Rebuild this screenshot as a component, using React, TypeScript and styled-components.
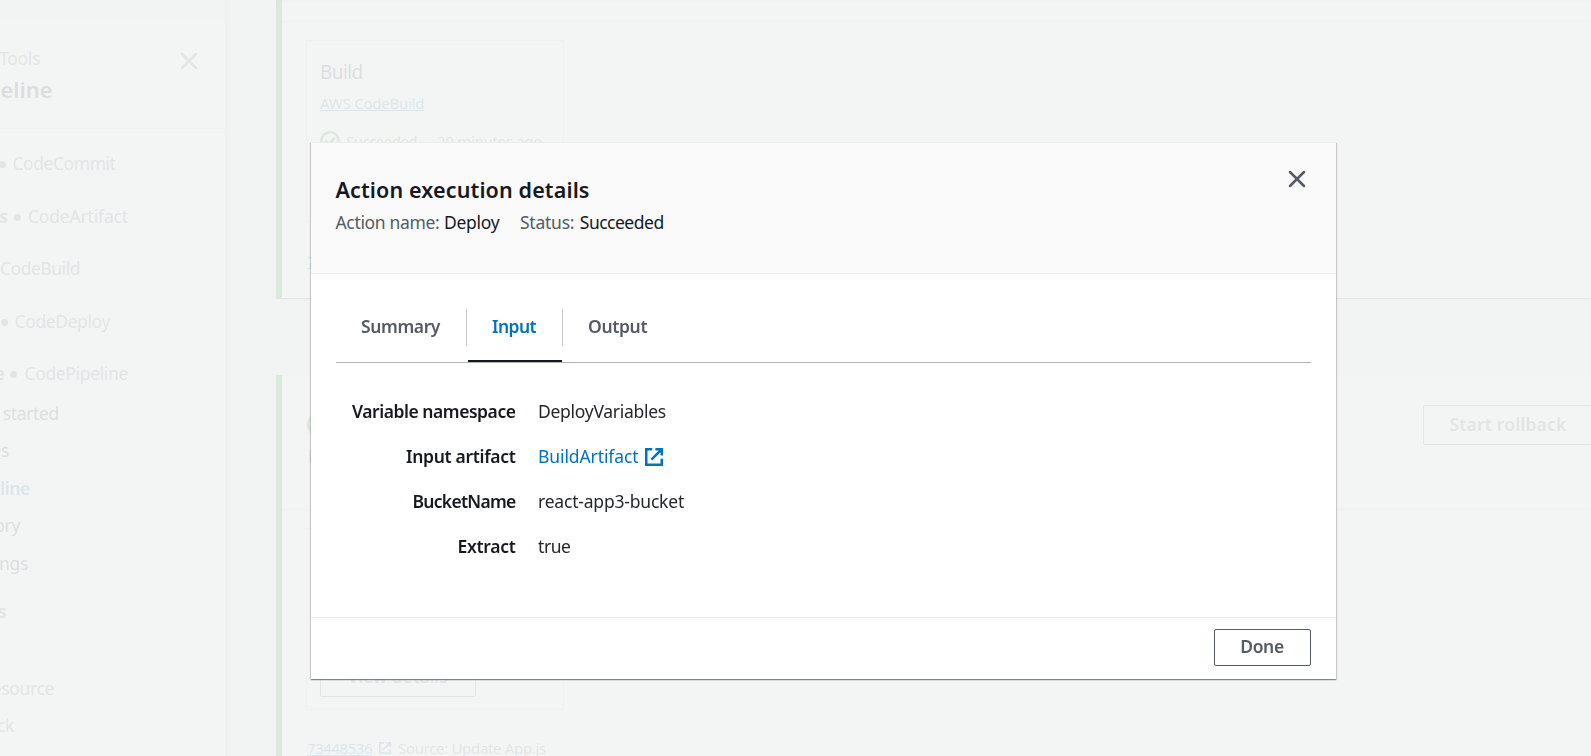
import React from 'react';
import styled, { createGlobalStyle, css } from 'styled-components';

const color = {
  ink: '#16191f',
  value: '#24272d',
  muted: '#545b64',
  link: '#0073bb',
  success: '#1d8102',
  canvas: '#f2f3f3',
  header: '#fafafa',
  border: '#eaeded',
  divider: '#d5dbdb',
};

const GlobalStyle = createGlobalStyle`
  * { box-sizing: border-box; }
  body {
    margin: 0;
    overflow: hidden;
    background: ${color.canvas};
    color: ${color.ink};
    font: 400 17.5px/24px "Noto Sans", "Open Sans", sans-serif;
  }
  h1, h2, p, dl, dt, dd { margin: 0; padding: 0; }
`;

interface TrackProps {
  $track?: number;
}

const tracking = css<TrackProps>`
  letter-spacing: ${(p) => p.$track ?? -0.35}px;
  white-space: nowrap;
`;

/* ---------- Console behind the dialog ---------- */

const Console = styled.div`
  display: grid;
  grid-template-columns: 227px 1fr;
  width: 1591px;
  height: 756px;
  overflow: hidden;
`;

const Sidebar = styled.nav`
  border-right: 1px solid #c3cacb;
  background: #fff;
  overflow: hidden;
`;

const SidebarTop = styled.div`
  height: 21px;
  background: ${color.canvas};
`;

const SidebarHeader = styled.header`
  display: flex;
  justify-content: space-between;
  height: 108px;
  padding: 25px 28px 0 0;
  border-bottom: 1px solid ${color.divider};
`;

const SidebarClose = styled.span`
  display: flex;
  padding-top: 6px;
`;

const Clipped = styled.div<TrackProps & { $width: number; $gap?: number; $tone?: string; $bold?: boolean }>`
  display: flex;
  justify-content: flex-end;
  align-items: center;
  width: ${(p) => p.$width}px;
  height: 24px;
  margin-top: ${(p) => p.$gap ?? 0}px;
  color: ${(p) => p.$tone ?? color.muted};
  font-weight: ${(p) => (p.$bold ? 600 : 400)};
  ${tracking}
`;

const Product = styled(Clipped)`
  height: 30px;
  font-size: 22px;
  line-height: 30px;
`;

const Dot = styled.i`
  flex: none;
  width: 7px;
  height: 7px;
  margin: 2px 7px 0 6px;
  border-radius: 50%;
  background: ${color.muted};
`;

const Main = styled.main`
  padding-left: 49px;
  overflow: hidden;
`;

const Stage = styled.section<{ $height: number; $gap?: number }>`
  width: 1400px;
  height: ${(p) => p.$height}px;
  margin-top: ${(p) => p.$gap ?? 0}px;
  border-left: 6px solid ${color.success};
  background: #fff;
  box-shadow: 0 1px 1px rgba(0, 28, 36, 0.6);
`;

const StageHeader = styled.header<{ $height: number }>`
  display: flex;
  justify-content: space-between;
  height: ${(p) => p.$height}px;
  padding-left: 25px;
  border-top: 1px solid ${color.border};
  border-bottom: 1px solid ${color.divider};
  background: ${color.header};
`;

const StageBody = styled.div`
  padding: 18px 24px 0;
`;

const StageTitle = styled.div`
  display: grid;
  gap: 8px;
  align-content: start;
  padding-top: 37px;
`;

const StageNote = styled.span`
  padding-left: 1px;
  color: ${color.ink};
`;

const ActionCard = styled.article<{ $height: number }>`
  display: flex;
  flex-direction: column;
  align-items: flex-start;
  width: 258px;
  height: ${(p) => p.$height}px;
  padding: 18px 13px 12px;
  border: 1px solid ${color.divider};
`;

const ActionName = styled.h2<TrackProps>`
  padding-bottom: 7px;
  font-size: 19px;
  font-weight: 400;
  line-height: 26px;
  ${tracking}
`;

const SmallLink = styled.span<TrackProps>`
  color: ${color.link};
  font-size: 15px;
  line-height: 22px;
  text-decoration: underline;
  text-underline-offset: 1px;
  ${tracking}
`;

const StatusLine = styled.div`
  display: flex;
  align-items: center;
  margin-top: 16px;
`;

const SmallText = styled.span<TrackProps & { $tone?: string }>`
  color: ${(p) => p.$tone ?? color.muted};
  font-size: 15px;
  line-height: 22px;
  ${tracking}
`;

const StatusText = styled(SmallText)`
  margin: 0 20px 0 6px;
`;

const Revision = styled.div<{ $gap: number }>`
  display: flex;
  align-items: center;
  gap: 7px;
  margin: ${(p) => p.$gap}px 0 0 1px;
`;

const CardFoot = styled.div`
  margin-top: auto;
`;

const RollbackSlot = styled.div`
  width: 253px;
  padding-top: 29px;
`;

const Button = styled.button<TrackProps & { $width: number; $height: number; $lift?: number }>`
  display: block;
  width: ${(p) => p.$width}px;
  height: ${(p) => p.$height}px;
  padding: 0 1px ${(p) => p.$lift ?? 3}px 0;
  border: 1px solid ${color.muted};
  border-radius: 2px;
  background: #fff;
  color: ${color.muted};
  font: inherit;
  font-weight: 600;
  text-align: center;
  ${tracking}
`;

/* ---------- Dialog ---------- */

const Scrim = styled.div`
  position: fixed;
  inset: 0;
  padding: 142px 0 0 311px;
  background: rgba(242, 243, 243, 0.9);
`;

const Dialog = styled.section`
  display: flex;
  flex-direction: column;
  width: 1025px;
  height: 537px;
  border-top: 1px solid ${color.border};
  background: #fff;
  box-shadow: 0 1px 1px 0 rgba(0, 28, 36, 0.3), 1px 1px 1px 0 rgba(0, 28, 36, 0.15),
    -1px 1px 1px 0 rgba(0, 28, 36, 0.15);
`;

const DialogHeader = styled.header`
  display: flex;
  justify-content: space-between;
  height: 131px;
  padding: 32px 30px 0 24.5px;
  border-bottom: 1px solid ${color.border};
  background: ${color.header};
`;

const Title = styled.h1<TrackProps>`
  font-size: 21.5px;
  font-weight: 600;
  line-height: 30px;
  ${tracking}
`;

const Meta = styled.p`
  display: flex;
  margin-top: 5px;
`;

const MetaLabel = styled.span<TrackProps & { $gap: number }>`
  margin-right: ${(p) => p.$gap}px;
  color: ${color.muted};
  ${tracking}
`;

const MetaValue = styled.span<TrackProps & { $gap?: number }>`
  margin-right: ${(p) => p.$gap ?? 0}px;
  ${tracking}
`;

const CloseButton = styled.button`
  display: flex;
  align-self: flex-start;
  margin-top: -5px;
  padding: 0;
  border: 0;
  background: none;
`;

const DialogBody = styled.div`
  flex: 1;
  padding: 35px 25px 0;
`;

const TabList = styled.div`
  display: flex;
  height: 54px;
  border-bottom: 1px solid #aab7b8;
`;

const Tab = styled.div<TrackProps & { $width: number; $active?: boolean }>`
  display: flex;
  flex-direction: column;
  justify-content: space-between;
  width: ${(p) => p.$width}px;
  color: ${(p) => (p.$active ? color.link : color.muted)};
  font-weight: 600;
  ${tracking}

  &::after {
    content: '';
    height: 2px;
    margin: 0 1px;
    background: ${(p) => (p.$active ? color.ink : 'transparent')};
  }
`;

const TabLabel = styled.span<{ $last?: boolean }>`
  height: 37px;
  padding-left: 25px;
  border-right: 1px solid ${(p) => (p.$last ? 'transparent' : '#c3cacb')};
  line-height: 35px;
`;

const Details = styled.dl`
  display: grid;
  grid-template-columns: 179.5px auto;
  grid-auto-rows: 24px;
  column-gap: 22.5px;
  row-gap: 21px;
  justify-content: start;
  padding-top: 36px;
`;

const Term = styled.dt<TrackProps>`
  text-align: right;
  font-weight: 600;
  ${tracking}
`;

const Value = styled.dd<TrackProps>`
  color: ${color.value};
  ${tracking}
`;

const ArtifactLink = styled.span`
  display: flex;
  align-items: center;
  gap: 7px;
  color: ${color.link};

  svg {
    margin-top: 2px;
  }
`;

const DialogFooter = styled.footer`
  display: flex;
  justify-content: flex-end;
  align-items: flex-start;
  height: 62px;
  padding: 11px 25px 0;
  border-top: 1px solid ${color.border};
`;

/* ---------- Icons ---------- */

const CloseIcon = () => (
  <svg width="18" height="18" viewBox="0 0 18 18" fill="none" stroke={color.muted} strokeWidth="2.5" strokeLinecap="round">
    <path d="M2 2 16 16M16 2 2 16" />
  </svg>
);

const ExternalIcon = ({ size }: { size: number }) => (
  <svg width={size} height={size} viewBox="0 0 18 18" fill="none" stroke={color.link} strokeWidth="2.5">
    <path d="M7.2 1.25H1.25v15.5h15.5v-5.9M10.4 1.25h6.35V7.6M16.4 1.6 6.4 11.6" />
  </svg>
);

const SuccessIcon = ({ size }: { size: number }) => (
  <svg width={size} height={size} viewBox="0 0 20 20" fill="none" stroke={color.success} strokeWidth="2.4">
    <circle cx="10" cy="10" r="8.8" />
    <path d="m5.4 9.4 3.4 3.5 5.8-6" />
  </svg>
);

const details = [
  { term: 'Variable namespace', termTrack: -0.46, value: 'DeployVariables', track: -0.28 },
  { term: 'Input artifact', termTrack: -0.32, value: 'BuildArtifact', track: -0.1, link: true },
  { term: 'BucketName', termTrack: -0.73, value: 'react-app3-bucket', track: -0.2 },
  { term: 'Extract', termTrack: -0.29, value: 'true', track: -0.43 },
];

export default function App() {
  return (
    <>
      <GlobalStyle />
      <Console>
        <Sidebar>
          <SidebarTop />
          <SidebarHeader>
            <div>
              <Clipped $width={40}>Tools</Clipped>
              <Product $width={52.5} $gap={4} $bold $tone={color.ink} $track={-0.05}>eline</Product>
            </div>
            <SidebarClose><CloseIcon /></SidebarClose>
          </SidebarHeader>
          <Clipped $width={115.5} $gap={22} $track={-0.45}><Dot />CodeCommit</Clipped>
          <Clipped $width={128} $gap={29} $track={-0.17}><b>ts</b><Dot />CodeArtifact</Clipped>
          <Clipped $width={80} $gap={28} $track={-0.47}>CodeBuild</Clipped>
          <Clipped $width={110} $gap={29} $track={-0.39}><Dot />CodeDeploy</Clipped>
          <Clipped $width={128} $gap={28} $track={-0.35}><b>e</b><Dot />CodePipeline</Clipped>
          <Clipped $width={59} $gap={16} $tone={color.ink}>started</Clipped>
          <Clipped $width={9} $gap={13} $tone={color.ink}>es</Clipped>
          <Clipped $width={30} $gap={14} $bold $tone={color.link}>line</Clipped>
          <Clipped $width={20} $gap={13} $tone={color.ink}>ory</Clipped>
          <Clipped $width={28} $gap={14} $tone={color.ink}>ngs</Clipped>
          <Clipped $width={6} $gap={24} $bold>s</Clipped>
          <Clipped $width={54} $gap={53}>esource</Clipped>
          <Clipped $width={14} $gap={13}>ck</Clipped>
        </Sidebar>

        <Main>
          <Stage $height={298}>
            <StageHeader $height={22} />
            <StageBody>
              <ActionCard $height={182}>
                <ActionName $track={-0.6}>Build</ActionName>
                <SmallLink $track={-0.23}>AWS CodeBuild</SmallLink>
                <StatusLine>
                  <SuccessIcon size={20} />
                  <StatusText $tone={color.success} $track={-0.52}>Succeeded</StatusText>
                  <SmallText $track={-0.3}>20 minutes ago</SmallText>
                </StatusLine>
              </ActionCard>
              <Revision $gap={28}>
                <SmallLink $track={-0.45}>7</SmallLink>
              </Revision>
            </StageBody>
          </Stage>

          <Stage $height={440} $gap={77}>
            <StageHeader $height={135}>
              <StageTitle>
                <SuccessIcon size={23} />
                <StageNote>P</StageNote>
              </StageTitle>
              <RollbackSlot>
                <Button $width={171} $height={40} $track={0.18}>Start rollback</Button>
              </RollbackSlot>
            </StageHeader>
            <StageBody>
              <ActionCard $height={182}>
                <CardFoot>
                  <Button $width={156} $height={38} $lift={5} $track={-0.17}>View details</Button>
                </CardFoot>
              </ActionCard>
              <Revision $gap={27}>
                <SmallLink $track={-0.45}>73448536</SmallLink>
                <ExternalIcon size={12} />
                <SmallText $track={-0.33}>Source: Update App.js</SmallText>
              </Revision>
            </StageBody>
          </Stage>
        </Main>
      </Console>

      <Scrim>
        <Dialog role="dialog">
          <DialogHeader>
            <div>
              <Title $track={0.13}>Action execution details</Title>
              <Meta>
                <MetaLabel $gap={4.5} $track={-0.33}>Action name:</MetaLabel>
                <MetaValue $gap={20.5} $track={-0.26}>Deploy</MetaValue>
                <MetaLabel $gap={5.5} $track={-0.24}>Status:</MetaLabel>
                <MetaValue $track={-0.5}>Succeeded</MetaValue>
              </Meta>
            </div>
            <CloseButton aria-label="Close"><CloseIcon /></CloseButton>
          </DialogHeader>

          <DialogBody>
            <TabList>
              <Tab $width={131} $track={-0.4}><TabLabel>Summary</TabLabel></Tab>
              <Tab $width={96} $track={-0.57} $active><TabLabel>Input</TabLabel></Tab>
              <Tab $width={110} $track={-0.35}><TabLabel $last>Output</TabLabel></Tab>
            </TabList>
            <Details>
              {details.map((d) => (
                <React.Fragment key={d.term}>
                  <Term $track={d.termTrack}>{d.term}</Term>
                  <Value $track={d.track}>
                    {d.link ? (
                      <ArtifactLink>
                        {d.value}
                        <ExternalIcon size={18} />
                      </ArtifactLink>
                    ) : (
                      d.value
                    )}
                  </Value>
                </React.Fragment>
              ))}
            </Details>
          </DialogBody>

          <DialogFooter>
            <Button $width={97} $height={37} $track={-0.38}>Done</Button>
          </DialogFooter>
        </Dialog>
      </Scrim>
    </>
  );
}
